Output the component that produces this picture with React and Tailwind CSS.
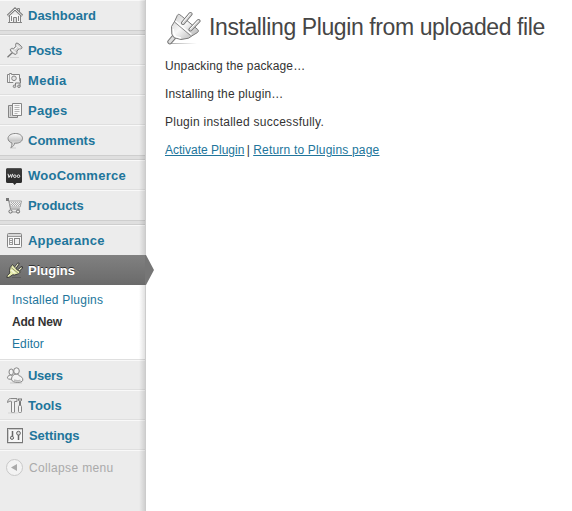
import React from "react";

const Svg = ({ children, className = "" }) => (
  <svg viewBox="0 0 18 18" className={`block h-[18px] w-[18px] shrink-0 overflow-visible ${className}`} fill="none" stroke="#858585" strokeWidth="1">
    {children}
  </svg>
);

const HomeIcon = () => (
  <Svg>
    <path d="M3.500 9v7.500h11V9" fill="#f7f7f7" />
    <path d="M11.500 4V2.500h2V6" fill="#ddd" />
    <path d="M1.800 9.800 9 3l7.200 6.800" stroke="#7c7c7c" strokeWidth="2.800" />
    <path d="M2.100 9.500 9 3l6.900 6.500" stroke="#f5f5f5" strokeWidth="1" />
    <path d="M7.500 16.500V11.500h3v5M5.500 10v5M12.500 10v5" fill="#ddd" />
    <path d="M2 16.500h14" />
  </Svg>
);

const PinIcon = () => (
  <Svg>
    <path d="M4 16.500h9" stroke="#d2d2d2" />
    <path d="M6.500 11.500 1.500 16.300" stroke="#777" strokeWidth="1.300" />
    <path d="M10 2.300c1.300-.7 2.600.5 4 1.700s2.600 2.400 1.600 3.500c-1 .7-2 .2-2.700.3l-2 2.300c.4 2.200-.3 3.400-1.700 3.300-1.900-.5-4.800-3-4.900-4.600.1-1.300 1.600-1.800 3.200-1.200l2.200-2c.2-1.100-.5-2.300.3-3.300Z" fill="#d5d5d5" stroke="#7d7d7d" />
    <path d="m10.500 4.200 3.800 3.300M5.800 8.800l4 3.200M8.600 8.300l2.300-2" stroke="#fff" />
  </Svg>
);

const MediaIcon = () => (
  <Svg>
    <path d="M1.500 3.500h2v-1h2v1h8v8h-12Z" fill="#f4f4f4" />
    <path d="M3.500 4v7" stroke="#aaa" />
    <circle cx="8" cy="7.300" r="2.300" fill="#e5e5e5" />
    <path d="M8.500 16v-4.500H15V7" stroke="#ececec" strokeWidth="2.500" />
    <path d="M9.500 15.500V12h4.500v3.500M14.500 12V7.500h-1" stroke="#7c7c7c" />
    <circle cx="8.500" cy="15.300" r="1.300" fill="#ccc" />
    <circle cx="12.900" cy="15.300" r="1.300" fill="#ccc" />
  </Svg>
);

const PagesIcon = () => (
  <Svg>
    <path d="M6 4.500H2.500v12h9v-2" fill="#d6d6d6" />
    <path d="M4.500 6v9" stroke="#aaa" />
    <path d="M6.500 2.500h9v12h-9Z" fill="#f8f8f8" />
    <path d="M8.500 4.500h5M8.500 6.500h5M8.500 8.500h5M8.500 10.500h5M8.500 12.500h3" stroke="#b5b5b5" />
  </Svg>
);

const CommentIcon = () => (
  <Svg>
    <defs>
      <linearGradient id="bubble" x1="0" y1="0" x2="0" y2="1">
        <stop offset="0" stopColor="#fff" />
        <stop offset=".5" stopColor="#c8c8c8" />
        <stop offset="1" stopColor="#f5f5f5" />
      </linearGradient>
    </defs>
    <path d="M4 17h6" stroke="#ccc" />
    <path d="M9.300 2.500c4.200 0 7.200 2.100 7.200 4.900s-2.800 4.800-6.600 4.800H8.600C8.400 14 7 15.800 4.900 16.500c.9-1.400 1.200-3 1-4.600C3.700 11.200 2 9.600 2 7.500c0-2.900 3.100-5 7.300-5Z" fill="url(#bubble)" />
  </Svg>
);

const WooIcon = () => (
  <Svg>
    <defs>
      <linearGradient id="woo" x1="0" y1="0" x2="0" y2="1">
        <stop offset="0" stopColor="#3b3b3b" />
        <stop offset="1" stopColor="#292929" />
      </linearGradient>
    </defs>
    <path d="M1.500 0h13Q16 0 16 1.500v12q0 1.500-1.500 1.500H10.500l-2 2-1.500-2H1.500Q0 15 0 13.500v-12Q0 0 1.500 0Z" fill="url(#woo)" stroke="none" />
    <path d="M1 .5h14" stroke="#555" />
    <path d="m2 5.800.9 3.700 1.800-3 .8 3 1.200-3.700" stroke="#ededed" strokeWidth="1" />
    <circle cx="8.800" cy="8.200" r="1.300" stroke="#ededed" />
    <circle cx="12.500" cy="8.200" r="1.300" stroke="#ededed" />
  </Svg>
);

const CartIcon = () => (
  <Svg>
    <path d="M0 1.500h2.500l2 9.500h9.500" stroke="#858585" />
    <path d="M3.300 3h12.200l-1.400 6H4.500Z" fill="#f2f2f2" stroke="#a2a2a2" />
    <path d="M5 4.500h10M5 6.500h9" stroke="#aaa" strokeDasharray="1 1" />
    <path d="M6 5.500h9M6 7.500h8" stroke="#aaa" strokeDasharray="1 1" />
    <path d="M3 14h11" stroke="#999" />
    <circle cx="4.500" cy="13.500" r="1.600" fill="#eee" stroke="#6c6c6c" />
    <circle cx="12" cy="13.500" r="1.600" fill="#eee" stroke="#6c6c6c" />
    <rect x="0" y="0" width="3" height="3" fill="#777" stroke="none" />
  </Svg>
);

const AppearanceIcon = () => (
  <Svg>
    <rect x="1.500" y="2.500" width="14" height="14" rx="1" fill="#fafafa" />
    <path d="M2 4h13" stroke="#d8d8d8" strokeWidth="2" />
    <path d="M2 5.500h13" stroke="#999" />
    <path d="M3 7.500h4M3 9.500h4M3 11.500h4M3 13.500h4M3.500 7v6.500M6.500 7v6.500" stroke="#999" />
    <rect x="8.500" y="7.500" width="5" height="6" fill="#f3f3f3" />
  </Svg>
);

const PlugIcon = () => (
  <Svg>
    <path d="M6 15.500h9" stroke="#5c5c5c" />
    <path d="m9.500 5.500 2.800-3.700M12.500 8.500l3.200-3" stroke="#383838" strokeWidth="2.600" strokeLinecap="round" />
    <path d="m9 6 3-4M12 9l3.300-3.100" stroke="#f6f8cf" strokeWidth="1.100" strokeLinecap="round" />
    <path d="M6.500 2.500 9 5.500l1 1.200 1.700 1.500 2.800 1.600-1.800 1.900-4 1.300-2-.2L3 15.300.8 15.500l.5-1.800 2.500-2.700-.3-2.500.7-3Z" fill="#e9eeb0" stroke="#3d3d3d" />
    <path d="m5 5.500 7.200 5.800" stroke="#949671" />
    <path d="m5.500 8 3 3" stroke="#fff" />
  </Svg>
);

const UsersIcon = () => (
  <Svg>
    <path d="M4 17h12" stroke="#c9c9c9" />
    <g fill="#f4f4f4">
      <path d="M4.300 9C2.300 9.300 1.200 11 1.500 12.200c.6 1.300 4.700 1.500 6 .3.600-1.700-1.400-3.100-3.200-3.500Z" />
      <ellipse cx="5.200" cy="6" rx="2.200" ry="3" />
      <ellipse cx="10.500" cy="5" rx="2.800" ry="3.200" />
      <path d="M8.800 8.300c-2.500.9-3.500 3.200-3.200 5.400.5 3.400 10.700 3.600 11.200.5.300-2.300-1.500-3.700-3.600-4.500-.9-.4-.9-.9-1-1.600Z" />
    </g>
    <path d="M8 14c2 1 4.500 1 6.500.2" stroke="#bdbdbd" strokeWidth="1.600" />
  </Svg>
);

const ToolsIcon = () => (
  <Svg>
    <path d="M1.500 6.500c.2-2.400 1.400-4 3-4h6.500v3H8.500v11h-3v-11L4 5Z" fill="#e8e8e8" />
    <path d="M7 7v9" stroke="#fff" />
    <path d="M12.500 2.500v2l1 1v4h1v-4l1-1v-2M14 2v4" stroke="#777" />
    <rect x="12.500" y="9.500" width="3" height="7" rx="1" fill="#f2f2f2" />
    <path d="M2 17h10" stroke="#d5d5d5" />
  </Svg>
);

const SettingsIcon = () => (
  <Svg>
    <rect x="1.500" y="2.500" width="15" height="14" fill="#f7f7f7" stroke="#777" />
    <path d="M2.500 15.500V3.500H16" stroke="#cbcbcb" />
    <path d="M6.500 5v5M12.500 9v5" stroke="#666" strokeWidth="1.500" />
    <circle cx="6" cy="11.800" r="1.600" fill="#ddd" stroke="#666" />
    <circle cx="12.500" cy="7.200" r="1.900" fill="#ddd" stroke="#666" />
    <path d="M1 17.500h16" stroke="#d2d2d2" />
  </Svg>
);

const BigPlug = () => (
  <svg viewBox="0 0 36 36" className="block h-9 w-9 shrink-0" fill="none">
    <defs>
      <linearGradient id="plug" x1="0" y1="0" x2="1" y2="1">
        <stop offset="0" stopColor="#c9c9c9" />
        <stop offset=".45" stopColor="#f8f8f8" />
        <stop offset="1" stopColor="#a9a9a9" />
      </linearGradient>
      <linearGradient id="ground" x1="0" y1="0" x2="1" y2="0">
        <stop offset="0" stopColor="#aaa" />
        <stop offset="1" stopColor="#fff" />
      </linearGradient>
    </defs>
    <path d="M5 34h27v1H5Z" fill="url(#ground)" />
    <path d="M4.800 32.800 9 28" stroke="#777" strokeWidth="5" strokeLinecap="round" />
    <path d="M4.800 32.800 9 28" stroke="#dedede" strokeWidth="3" strokeLinecap="round" />
    <path d="M14.500 5.500c-1-.4-1.700 0-2.200.9L9.800 12 6.500 17.500l.3 7.500 2.200 3.700 7 1.800 7.500-1.300 4.500-3 4.500-2.700c1.300-1 1-2.300.2-3L16.500 7Z" fill="url(#plug)" stroke="#7a7a7a" />
    <path d="m9.500 13 16 13.500" stroke="#8a8a8a" />
    <path d="m10.500 12 16 13.500" stroke="#fff" strokeWidth="1.200" />
    <path d="m8.300 20 .6 5 2 2.700 5 1.300" stroke="#fff" strokeWidth="1.300" />
    <path d="m18 14 7.500-9M25.500 20.500l8-8.500" stroke="#6f6f6f" strokeWidth="4" strokeLinecap="round" />
    <path d="m18 14 7.500-9M25.500 20.500l8-8.500" stroke="#d6d6d6" strokeWidth="2.400" strokeLinecap="round" />
    <path d="m17.600 13.600 7.500-9M25.100 20.100l8-8.500" stroke="#fff" strokeWidth="1" />
  </svg>
);

function Item({ icon: Icon, label, last, labelClass = "pl-1", iconClass = "pl-[6px] pt-[5px]" }) {
  return (
    <a className={`flex h-[30px] border-t border-t-[#f9f9f9] text-[13px] leading-[18px] font-bold text-[#21759b] ${last ? "" : "border-b border-b-[#dfdfdf]"}`}>
      <span className={`w-6 shrink-0 ${iconClass}`}><Icon /></span>
      <span className={`pt-[6px] ${labelClass}`}>{label}</span>
    </a>
  );
}

const Separator = () => <div className="h-[5px] border-y border-[#cecece] bg-[#dfdfdf]" />;

export default function App() {
  return (
    <div className="flex h-[511px] w-[572px] overflow-hidden bg-white font-['Liberation_Sans',Arial,sans-serif] text-[12px] text-[#333]">
      <nav className="relative w-[146px] shrink-0 border-r border-[#cccccc] bg-[#ececec]">
        <Item icon={HomeIcon} label="Dashboard" last />
        <Separator />
        <Item icon={PinIcon} label="Posts" labelClass="pl-1 tracking-[-0.300px]" />
        <Item icon={MediaIcon} label="Media" labelClass="pl-1 tracking-[0.350px]" />
        <Item icon={PagesIcon} label="Pages" labelClass="pl-1 tracking-[0.250px]" />
        <Item icon={CommentIcon} label="Comments" last />
        <Separator />
        <Item icon={WooIcon} label="WooCommerce" iconClass="pl-[6px] pt-[7px]" labelClass="pl-1 tracking-[0.260px]" />
        <Item icon={CartIcon} label="Products" iconClass="pl-[6px] pt-[7px]" labelClass="pl-1 tracking-[-0.080px]" last />
        <Separator />
        <Item icon={AppearanceIcon} label="Appearance" labelClass="pl-1 tracking-[0.220px]" last />
        <div className="relative z-10 flex h-[30px] bg-linear-to-b from-[#818181] to-[#6a6a6a] text-[13px] leading-[18px] font-bold text-white">
          <span className="w-6 shrink-0 pt-[7px] pl-[6px]"><PlugIcon /></span>
          <span className="pt-[7px] pl-1 [text-shadow:0_-1px_0_#333]">Plugins</span>
          <svg viewBox="0 0 9 30" className="absolute top-0 left-[145px] h-[30px] w-[9px]">
            <path d="M0 0h1l8 15-8 15H0Z" fill="#767676" />
          </svg>
        </div>
        <div className="h-[75px] border-b border-[#dfdfdf] bg-white pt-1 pl-3 text-[12px] leading-[22px] text-[#21759b]">
          <div className="tracking-[0.220px]">Installed Plugins</div>
          <div className="font-bold tracking-[-0.200px] text-[#333]">Add New</div>
          <div className="tracking-[0.100px]">Editor</div>
        </div>
        <Item icon={UsersIcon} label="Users" labelClass="pl-1 tracking-[-0.300px]" />
        <Item icon={ToolsIcon} label="Tools" />
        <Item icon={SettingsIcon} label="Settings" labelClass="pl-[5px] tracking-[-0.100px]" />
        <div className="flex border-t border-[#f9f9f9] pt-[8px] pl-[6px] text-[12px] leading-[18px] text-[#aaa]">
          <svg viewBox="0 0 17 17" className="h-[17px] w-[17px]">
            <circle cx="8.500" cy="8.500" r="8" fill="#f3f3f3" stroke="#c8c8c8" />
            <path d="M11 5v7L5 8.500Z" fill="#aaa" />
          </svg>
          <span className="pl-[6px] tracking-[0.350px]">Collapse menu</span>
        </div>
        <div className="absolute inset-y-0 right-0 w-[6px] bg-linear-to-r from-transparent to-black/12" />
      </nav>
      <main className="pl-[19px]">
        <div className="flex pt-[9px]">
          <BigPlug />
          <h2 className="pt-[4px] pl-2 text-[23px] leading-[29px] tracking-[-0.400px] whitespace-nowrap text-[#464646]">Installing Plugin from uploaded file</h2>
        </div>
        <p className="mt-[13px] leading-[17px] tracking-[0.130px]">Unpacking the package…</p>
        <p className="mt-[11px] leading-[17px] tracking-[0.170px]">Installing the plugin…</p>
        <p className="mt-[11px] leading-[17px] tracking-[0.260px]">Plugin installed successfully.</p>
        <p className="mt-[11px] leading-[17px]">
          <a className="text-[#21759b] underline">Activate Plugin</a> <span className="-ml-px">|</span> <a className="tracking-[0.190px] text-[#21759b] underline">Return to Plugins page</a>
        </p>
      </main>
    </div>
  );
}
